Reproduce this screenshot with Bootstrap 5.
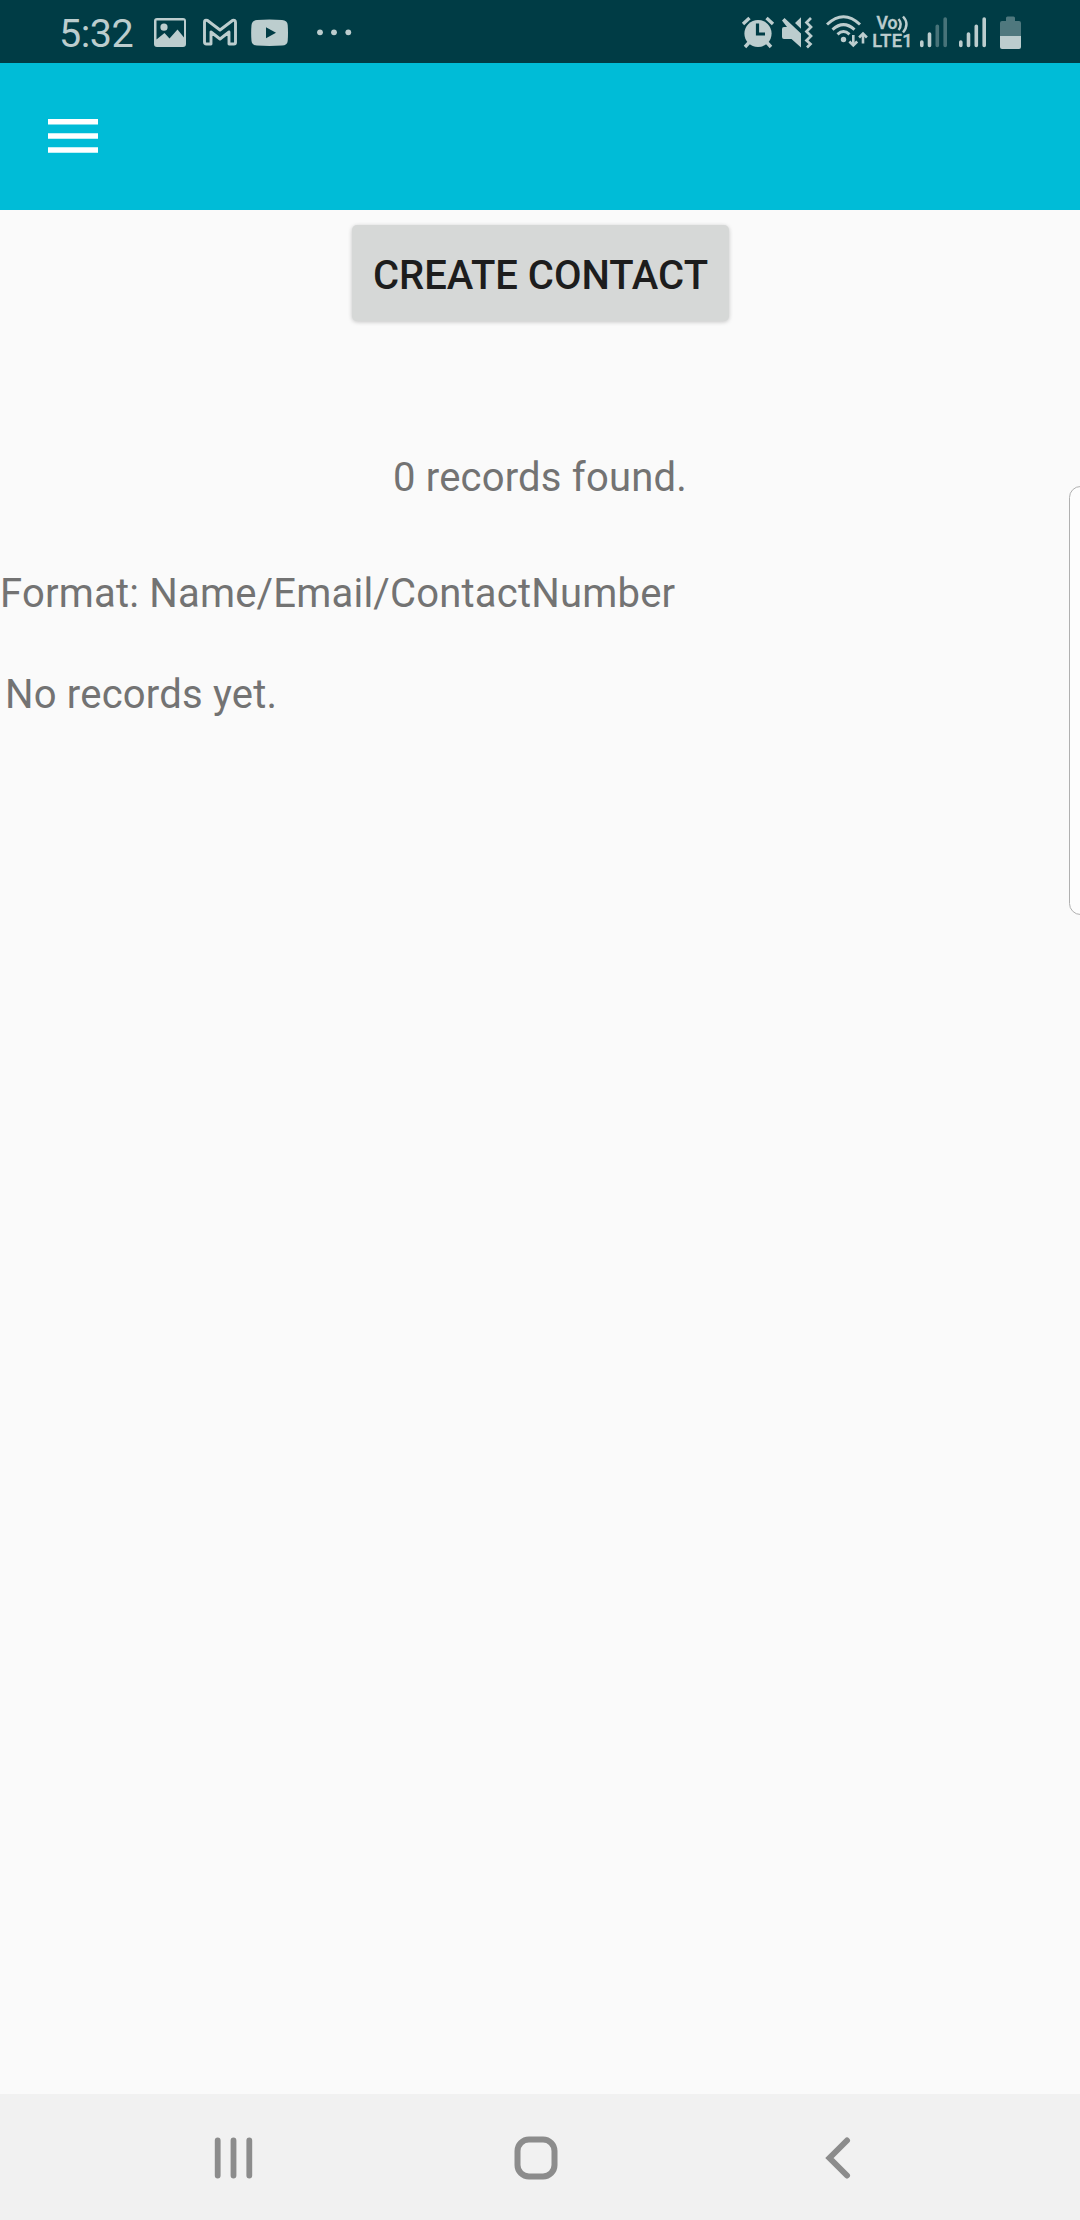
<!DOCTYPE html>
<html lang="en">
<head>
<meta charset="utf-8">
<meta name="viewport" content="width=device-width, initial-scale=1">
<title>Contacts</title>
<link href="https://cdn.jsdelivr.net/npm/bootstrap@5.3.0/dist/css/bootstrap.min.css" rel="stylesheet">
<style>
  body { font-family: Roboto, "Liberation Sans", sans-serif; font-size: 40px; line-height: 48px; background: #fafafa; color: #737373; }
  svg { display: block; flex: none; }
  .screen { width: 1080px; height: 2220px; }
  .status-bar { height: 63px; background: #003c45; color: #bccdce; padding: 0 59px 0 59px; }
  .status-bar svg { fill: currentColor; }
  .clock { width: 95px; font-size: 39.5px; letter-spacing: -.5px; padding-top: 10px; }
  .app-bar { height: 147px; background: #00bcd7; padding: 0 48px 1px; }
  .create-btn { --bs-btn-font-size: 40px; --bs-btn-font-weight: 500; --bs-btn-line-height: 48px; --bs-btn-color: #1d1d1d; --bs-btn-bg: #d6d8d7; --bs-btn-border-radius: 5px; --bs-btn-padding-x: 0; --bs-btn-border-width: 0;
    width: 377px; height: 96px; margin: 15px 0 0 1px; padding-top: 11px; box-shadow: 0 1px 4px rgba(0,0,0,.22); }
  main { letter-spacing: .2px; }
  .create-btn { letter-spacing: 0; }
  .found { margin-top: 133px; }
  .format { margin-top: 68px; }
  .empty { margin-top: 53px; padding-left: 5px; }
  .edge-panel { top: 486px; right: -12px; width: 23px; height: 429px; border: 1.5px solid #b0b0b0; border-radius: 16px; background: #fdfdfd; }
  .nav-keys { height: 126px; background: #f1f1f1; color: #8c8c8c; padding: 2px 229px 0 214px; }
  .home-key { margin-right: 8px; }
</style>
<script src="https://cdn.jsdelivr.net/npm/bootstrap@5.3.0/dist/js/bootstrap.bundle.min.js"></script>
</head>
<body>
<div class="screen d-flex flex-column position-relative overflow-hidden">
  <header class="status-bar d-flex justify-content-between">
    <div class="d-flex">
      <span class="clock">5:32</span>
      <svg width="49" height="63" viewBox="154 0 49 63"><path fill-rule="evenodd" d="M157 18h26q3 0 3 3v23q0 3-3 3h-26q-3 0-3-3v-23q0-3 3-3zM156.500 20.500v19l8-6.500 5 5.500 8-9 6.500 8v-17zM164 23.600a3.600 3.600 0 1 1 0 7.200a3.600 3.600 0 1 1 0-7.200z"/></svg>
      <svg width="48" height="63" viewBox="203 0 48 63"><path d="M204.500 22q0-2.500 3-1.500l12.500 9.500 12.500-9.500q3-1 3 2v20q0 1.500-1.500 1.500h-5v-12l-9 7-9-7v12h-4.500q-2 0-2-2z" fill="none" stroke="currentColor" stroke-width="2.900" stroke-linejoin="round"/></svg>
      <svg width="64" height="63" viewBox="251 0 64 63"><path fill-rule="evenodd" d="M257 20q12.500-1 25 0q5.500.4 5.700 5q.6 8 0 16q-.4 4.300-5.700 4.600q-12.500.8-25 0q-5-.4-5.500-4.600q-.7-8 0-16q.5-4.600 5.500-5zM266 27.300v10.900l10-5.400z"/></svg>
      <svg width="40" height="63" viewBox="315 0 40 63"><circle cx="320" cy="32.300" r="2.900"/><circle cx="334" cy="32.300" r="2.900"/><circle cx="348.300" cy="32.300" r="2.900"/></svg>
    </div>
    <div class="d-flex">
      <svg width="40" height="63" viewBox="741 0 40 63"><circle cx="758" cy="33.500" r="13.600"/><path d="M743 24l6.500-6M773 24l-6.500-6" stroke="currentColor" stroke-width="3.400"/><path d="M749.500 42l-4.500 5M766.500 42l4.500 5" stroke="currentColor" stroke-width="3.400"/><path d="M757.500 23.500v10.500h7.500" fill="none" stroke="#003c45" stroke-width="3.200"/></svg>
      <svg width="45" height="63" viewBox="781 0 45 63"><path d="M784 27h3l-5-6.500 2.500-2.500 16.500 15.500v14l-9.500-8.500h-7.500q-2 0-2-2v-8q0-2 2-2zM795 23l6-5.700v11.500z"/><path d="M811 18l-4.500 4.500 4.500 4.500-4.500 4.500 4.500 4.500-4.500 4.500 4 3.500-3.500 3.500" fill="none" stroke="currentColor" stroke-width="2.700"/></svg>
      <svg width="46" height="63" viewBox="826 0 46 63"><g fill="none" stroke="currentColor" stroke-width="3"><path d="M827 24.500q16.500-15.500 33 0M832.500 29.600q11-10 22 0M837.500 34.300q6-5.500 12 0" /><path d="M853.300 35v9.500M863 43.500v-9.500" stroke-width="2.600"/><path d="M849.400 41.500l3.900 4 3.900-4M859.100 37.500l3.900-4 3.900 4" stroke-width="2.600"/></g><circle cx="843.500" cy="39.500" r="2.700"/></svg>
      <svg width="48" height="63" viewBox="872 0 48 63" font-family="Roboto, sans-serif" font-weight="500"><g stroke="currentColor" stroke-width=".4"><text x="876.500" y="29.300" font-size="17.500" textLength="21" lengthAdjust="spacingAndGlyphs">Vo</text><text x="872.200" y="46.800" font-size="18.200" textLength="40.500" lengthAdjust="spacing">LTE1</text></g><path d="M898.500 19q4.500 5.200 0 11M903 16.500q7 7.500 0 16" fill="none" stroke="currentColor" stroke-width="2.400"/></svg>
      <svg width="37" height="63" viewBox="920 0 37 63"><g stroke="currentColor" stroke-width="3.600" stroke-linecap="round"><path d="M921.800 42v3.500M929.500 34v11.500"/><path d="M937.300 26.200v19.300M945.200 19v26.500" opacity=".38"/></g></svg>
      <svg width="42" height="63" viewBox="957 0 42 63"><path d="M960.800 42v3.500M968.500 34v11.500M976.300 26.200v19.300M984.200 19v26.500" stroke="currentColor" stroke-width="3.600" stroke-linecap="round"/></svg>
      <svg width="22" height="63" viewBox="999 0 22 63"><path d="M1000 36v-13q0-2 2-2h4v-3q0-1.500 1.500-1.500h6q1.500 0 1.500 1.500v3h4q2 0 2 2v13z" opacity=".42"/><path d="M1000 36h21v11q0 2-2 2h-17q-2 0-2-2z"/></svg>
    </div>
  </header>

  <nav class="app-bar d-flex align-items-center">
    <svg width="50" height="34" viewBox="0 0 50 34" role="img" aria-label="Menu"><path d="M0 2.800h50M0 17h50M0 31h50" stroke="#fff" stroke-width="5.600"/></svg>
  </nav>

  <main class="flex-grow-1 d-flex flex-column">
    <button type="button" class="btn create-btn align-self-center">CREATE CONTACT</button>
    <div class="found text-center">0 records found.</div>
    <div class="format">Format: Name/Email/ContactNumber</div>
    <div class="empty">No records yet.</div>
  </main>

  <div class="edge-panel position-absolute"></div>

  <footer class="nav-keys d-flex justify-content-between align-items-center">
    <svg width="40" height="44" viewBox="0 0 40 44"><path d="M3.700 4.500v35M19.500 4.500v35M35.300 4.500v35" stroke="currentColor" stroke-width="5.800" stroke-linecap="round"/></svg>
    <svg class="home-key" width="44" height="44" viewBox="0 0 44 44"><rect x="3.500" y="3.500" width="37" height="37" rx="11.500" fill="none" stroke="currentColor" stroke-width="6"/></svg>
    <svg width="26" height="44" viewBox="0 0 26 44"><path d="M22 4.500L4.500 22 22 39.500" fill="none" stroke="currentColor" stroke-width="6" stroke-linecap="round"/></svg>
  </footer>
</div>
</body>
</html>
